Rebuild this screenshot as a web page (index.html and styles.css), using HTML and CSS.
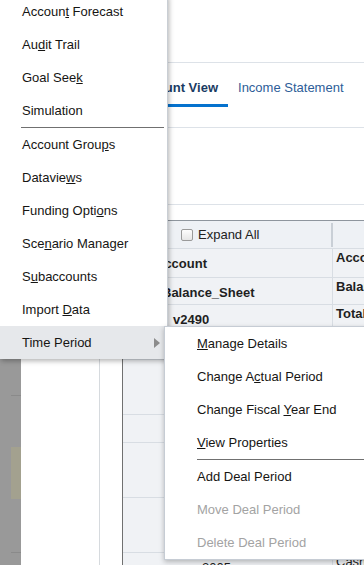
FILE: index.html
```html
<!DOCTYPE html>
<html>
<head>
    <title>Account View</title>
    <link rel="stylesheet" href="styles.css">
</head>
<body>
    <div class="app">
        <div class="rail">
            <div class="rail-cell top"></div>
            <div class="rail-cell short"></div>
            <div class="rail-cell marked"></div>
            <div class="rail-cell mid"></div>
            <div class="rail-cell"></div>
        </div>

        <div class="nav">
            <div class="nav-col"></div>
        </div>

        <div class="main">
            <div class="masthead"></div>

            <div class="tabs">
                <div class="tab active">Account View</div>
                <div class="tab">Income Statement</div>
            </div>

            <div class="toolbar"></div>
            <div class="spacer"></div>

            <div class="grid">
                <div class="grid-row head">
                    <div class="cell first">
                        <input type="checkbox" class="check">
                        <span>Expand All</span>
                    </div>
                    <div class="cell second"></div>
                </div>
                <div class="grid-row h28">
                    <div class="cell first strong indent-0">Account</div>
                    <div class="cell second strong">Account Type</div>
                </div>
                <div class="grid-row h26">
                    <div class="cell first strong indent-1">Balance_Sheet</div>
                    <div class="cell second strong">Balance Sheet</div>
                </div>
                <div class="grid-row h54">
                    <div class="cell first strong indent-2">v2490</div>
                    <div class="cell second strong">Total</div>
                </div>
                <div class="grid-row h54">
                    <div class="cell first"></div>
                    <div class="cell second"></div>
                </div>
                <div class="grid-row h27">
                    <div class="cell first"></div>
                    <div class="cell second"></div>
                </div>
                <div class="grid-row h54">
                    <div class="cell first"></div>
                    <div class="cell second"></div>
                </div>
                <div class="grid-row h54">
                    <div class="cell first"></div>
                    <div class="cell second"></div>
                </div>
                <div class="grid-row h54">
                    <div class="cell first tree"><span class="twisty"></span>2005</div>
                    <div class="cell second">Cash</div>
                </div>
            </div>
        </div>
    </div>

    <!-- context menu -->
    <div class="menu">
        <div class="menu-item">Accoun<u>t</u> Forecast</div>
        <div class="menu-item">Au<u>d</u>it Trail</div>
        <div class="menu-item">Goal See<u>k</u></div>
        <div class="menu-item">Simulation</div>
        <div class="menu-sep"></div>
        <div class="menu-item">Account Grou<u>p</u>s</div>
        <div class="menu-item">Datavie<u>w</u>s</div>
        <div class="menu-item">Funding Opti<u>o</u>ns</div>
        <div class="menu-item">Sce<u>n</u>ario Manager</div>
        <div class="menu-item">S<u>u</u>baccounts</div>
        <div class="menu-item">Import <u>D</u>ata</div>
        <div class="menu-item open">
            <span>Time Period</span>
            <svg class="arrow" width="6" height="10" viewBox="0 0 6 10"><path d="M0 0 L6 5 L0 10 Z" fill="#8c8c8c"/></svg>
        </div>
    </div>

    <div class="submenu">
        <div class="menu-item"><u>M</u>anage Details</div>
        <div class="menu-item">Change A<u>c</u>tual Period</div>
        <div class="menu-item">Change Fiscal <u>Y</u>ear End</div>
        <div class="menu-item"><u>V</u>iew Properties</div>
        <div class="menu-sep"></div>
        <div class="menu-item">Add Deal Period</div>
        <div class="menu-item disabled">Move Deal Period</div>
        <div class="menu-item disabled">Delete Deal Period</div>
    </div>
</body>
</html>
```

FILE: styles.css
```css
* {
    margin: 0;
    padding: 0;
    box-sizing: border-box;
}

body {
    font-family: "Liberation Sans", Arial, sans-serif;
    font-size: 13px;
    color: #1f1f1f;
    width: 364px;
    height: 565px;
    overflow: hidden;
    background: #fff;
}

.app {
    display: flex;
    height: 565px;
}

/* left rail (dimmed) */
.rail {
    width: 21px;
    flex-shrink: 0;
    background: #999;
    padding-left: 11px;
    display: flex;
    flex-direction: column;
}

.rail-cell {
    flex-shrink: 0;
}

.rail-cell.top {
    height: 396px;
    border-bottom: 1px solid #8a8a8a;
}

.rail-cell.short {
    height: 51px;
}

.rail-cell.marked {
    height: 52px;
    background: #a3a18f;
}

.rail-cell.mid {
    height: 54px;
    border-bottom: 1px solid #8a8a8a;
}

.nav {
    width: 102px;
    flex-shrink: 0;
    border-right: 1px solid #707070;
    background: #fff;
}

.nav-col {
    width: 79px;
    height: 100%;
    border-right: 1px solid #d6dade;
}

.main {
    flex: 1;
    min-width: 0;
    overflow: hidden;
}

.masthead {
    height: 63px;
    border-bottom: 1px solid #dde2e8;
}

.tabs {
    height: 65px;
    border-bottom: 1px solid #dde2e8;
    display: flex;
    align-items: flex-start;
    gap: 10px;
    padding-left: 10px;
}

.tab {
    padding: 17px 10px 9px 0;
    line-height: 15px;
    color: #2d5d98;
    border-bottom: 3px solid transparent;
    white-space: nowrap;
}

.tab.active {
    font-weight: bold;
    color: #1a3b63;
    border-bottom-color: #0572ce;
}

.toolbar {
    height: 77px;
    border-bottom: 1px solid #dde2e8;
}

.spacer {
    height: 15px;
}

/* tree table */
.grid {
    width: 400px;
    border-top: 1px solid #8e959d;
    background: #f0f2f5;
}

.grid-row {
    display: flex;
    border-bottom: 1px solid #d8dde3;
}

.grid-row.head {
    height: 28px;
    background: #eef1f5;
    align-items: center;
}

.grid-row.h28 { height: 29px; }
.grid-row.h26 { height: 27px; }
.grid-row.h27 { height: 28px; }
.grid-row.h54 { height: 55px; }

.cell {
    line-height: 15px;
    white-space: nowrap;
}

.cell.first {
    width: 210px;
    border-right: 1px solid #d8dde3;
    padding-top: 7px;
    height: 100%;
}

.cell.second {
    padding: 1px 0 0 3px;
}

.head .cell.first {
    display: flex;
    align-items: center;
    padding: 0 0 0 58px;
    border-right: 2px solid #c9cfd6;
    height: 24px;
}

.head .cell.first span {
    padding-left: 5px;
    color: #222;
}

.check {
    appearance: none;
    width: 12px;
    height: 12px;
    border: 1px solid #9a9a9a;
    border-radius: 2px;
    background: linear-gradient(#fdfdfd, #e6e6e6);
}

.strong {
    font-weight: bold;
}

.indent-0 {
    padding-left: 32px;
}

.indent-1 {
    padding-left: 39px;
}

.indent-2 {
    padding-left: 50px;
}

.tree {
    padding-left: 57px;
}

.twisty {
    display: inline-block;
    width: 0;
    height: 0;
    border-left: 5px solid transparent;
    border-bottom: 5px solid #555;
    margin-right: 17px;
}

/* menus */
.menu {
    position: absolute;
    left: 0;
    top: -5px;
    width: 168px;
    background: #fff;
    border-right: 1px solid #c9ced4;
    box-shadow: 1px 2px 5px rgba(0, 0, 0, 0.3);
}

.submenu {
    position: absolute;
    left: 164px;
    top: 326px;
    width: 230px;
    background: #fff;
    border: 1px solid #c6ccd4;
    box-shadow: 0 2px 5px rgba(0, 0, 0, 0.25);
}

.menu-item {
    height: 33px;
    line-height: 33px;
    padding-left: 22px;
    color: #161513;
    white-space: nowrap;
}

.submenu .menu-item {
    padding-left: 32px;
}

.menu-item.open {
    background: #e6e8eb;
    display: flex;
    align-items: center;
    justify-content: space-between;
    padding-right: 7px;
}

.menu-item.disabled {
    color: #a3a3a3;
}

.menu-sep {
    height: 1px;
    background: #707070;
    margin: 0 3px 0 21px;
}

.submenu .menu-sep {
    margin: 0 0 0 32px;
}
```
